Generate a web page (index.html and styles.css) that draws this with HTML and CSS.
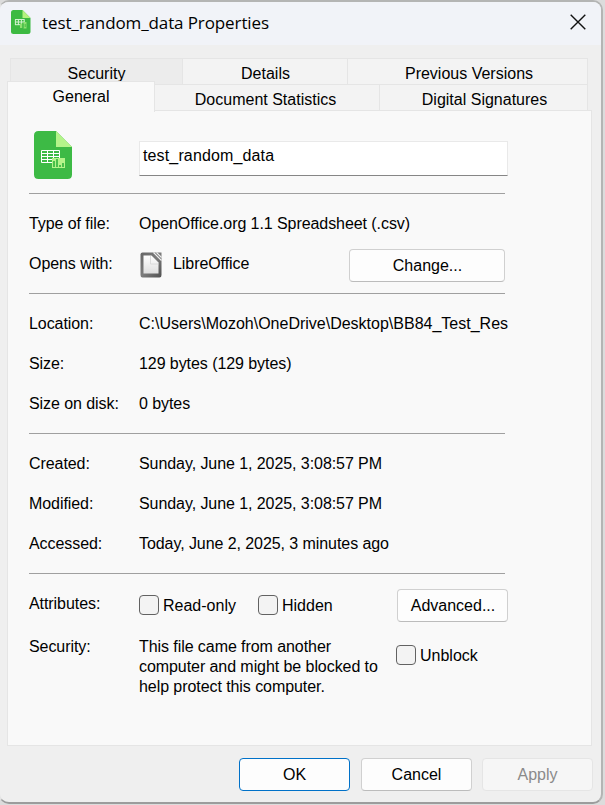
FILE: index.html
```html
<!DOCTYPE html>
<html lang="en">
<head>
<meta charset="utf-8">
<title>test_random_data Properties</title>
<link rel="stylesheet" href="styles.css">
</head>
<body>
<div class="window">
  <header class="titlebar">
    <svg class="title-icon" width="20" height="24" viewBox="0 0 20 24">
      <path d="M2.5 0H11.5L19.5 8V21.5Q19.5 24 17 24H2.5Q0 24 0 21.5V2.5Q0 0 2.5 0Z" fill="#3dba42"/>
      <path d="M11.5 0L19.5 8H11.5Z" fill="#b4f27e"/>
      <path d="M4 9.5H13.5M4 12H13.5M4 14.7H10M4.4 9.5V15M7.4 9.5V15M10.4 9.5V15M13.2 9.5V12" fill="none" stroke="#d4f3d0" stroke-width="1"/>
      <path d="M9 13.5H11.5V18H9ZM12.5 12H15.5V18.5H12.5Z" fill="#8fe070"/>
      <path d="M11.9 14V18M14.2 14V17" stroke="#3dba42" stroke-width=".9"/>
    </svg>
    <h1 class="title">test_random_data Properties</h1>
    <svg class="close" width="16" height="16" viewBox="0 0 16 16"><path d="M.7 .7L15.3 15.3M15.3 .7L.7 15.3" stroke="#111" stroke-width="1.4"/></svg>
  </header>
  <nav class="tabs">
    <div class="tab-row back">
      <div class="tab security">Security</div>
      <div class="tab details">Details</div>
      <div class="tab versions">Previous Versions</div>
    </div>
    <div class="tab-row front">
      <div class="tab general">General</div>
      <div class="tab stats">Document Statistics</div>
      <div class="tab signatures">Digital Signatures</div>
    </div>
  </nav>
  <main class="panel">
    <div class="file-head">
      <svg class="file-icon" width="38" height="48" viewBox="0 0 38 48">
        <path d="M4 0H22L38 16V43.5Q38 48 33.5 48H4.5Q0 48 0 43.5V4.5Q0 0 4.5 0Z" fill="#3dba45"/>
        <path d="M22 0L38 16H22Z" fill="#b4f48a"/>
        <path d="M7.5 19.5H25.5V31.5H7.5ZM7 22.5H26M7 25.5H26M7 28.5H26M13.5 19V32M19.5 19V32" fill="none" stroke="#fff" stroke-width="1"/>
        <path d="M18 27H31V37H18Z" fill="#b4f48a"/>
        <path d="M20 30V36M23 28V36M26 34V36M29 32V36" stroke="#3dba45" stroke-width="1.8"/>
      </svg>
      <div class="name-field">test_random_data</div>
    </div>
    <section class="group">
      <div class="row"><span class="label">Type of file:</span><span>OpenOffice.org 1.1 Spreadsheet (.csv)</span></div>
      <div class="row"><span class="label">Opens with:</span>
        <svg class="app-icon" width="22" height="26" viewBox="0 0 22 26">
          <defs>
            <linearGradient id="frame" x1="0" y1="0" x2="1" y2="1"><stop offset="0" stop-color="#666"/><stop offset=".5" stop-color="#7c7c7c"/><stop offset="1" stop-color="#505050"/></linearGradient>
            <linearGradient id="paper" x1="0" y1="0" x2="0" y2="1"><stop offset="0" stop-color="#fff"/><stop offset="1" stop-color="#dedede"/></linearGradient>
          </defs>
          <path d="M2.5 .5H21.5V23Q21.5 25.5 19.5 25.5H2.5Q.5 25.5 .5 23V2.5Q.5 .5 2.5 .5Z" fill="url(#frame)"/>
          <path d="M3.5 3.5H11.5L18.5 10.5V21.5H3.5Z" fill="url(#paper)"/>
          <path d="M10.5 4V12H18.5" fill="none" stroke="#d5d5d5" stroke-width=".8"/>
          <path d="M13.5 .5L21.5 8.5M16.5 .5L21.5 5.5" stroke="#eee" stroke-width="1.2"/>
        </svg>
        <span>LibreOffice</span><span class="button change">Change...</span></div>
    </section>
    <section class="group">
      <div class="row"><span class="label">Location:</span><span class="path">C:\Users\Mozoh\OneDrive\Desktop\BB84_Test_Res</span></div>
      <div class="row"><span class="label">Size:</span><span>129 bytes (129 bytes)</span></div>
      <div class="row"><span class="label">Size on disk:</span><span>0 bytes</span></div>
    </section>
    <section class="group">
      <div class="row"><span class="label">Created:</span><span>Sunday, June 1, 2025, 3:08:57 PM</span></div>
      <div class="row"><span class="label">Modified:</span><span>Sunday, June 1, 2025, 3:08:57 PM</span></div>
      <div class="row"><span class="label">Accessed:</span><span>Today, June 2, 2025, 3 minutes ago</span></div>
    </section>
    <section class="group">
      <div class="row attributes"><span class="label">Attributes:</span>
        <span class="option readonly"><i class="box"></i><span>Read-only</span></span>
        <span class="option"><i class="box"></i><span>Hidden</span></span>
        <span class="button advanced">Advanced...</span></div>
      <div class="row blocked"><span class="label">Security:</span>
        <p class="notice">This file came from another<br>computer and might be blocked to<br>help protect this computer.</p>
        <span class="option unblock"><i class="box"></i><span>Unblock</span></span></div>
    </section>
  </main>
  <footer class="actions">
    <span class="button primary">OK</span>
    <span class="button">Cancel</span>
    <span class="button disabled">Apply</span>
  </footer>
</div>
</body>
</html>
```
FILE: styles.css
```css
* { box-sizing: border-box; }
body {
  margin: 0;
  width: 605px;
  height: 805px;
  overflow: hidden;
  background: #dcdcdc;
  font: 16px/20px "Liberation Sans", Arial, sans-serif;
  color: #000;
}
.window {
  width: 604px;
  height: 804px;
  margin-left: -1px;
  display: flex;
  flex-direction: column;
  background: #efefef;
  border: 2px solid #b4b5b4;
  border-left: 1px solid #e4e4e4;
  border-bottom-color: #9c9c9c;
  border-radius: 10px;
  overflow: hidden;
}
.titlebar {
  height: 43px;
  flex: none;
  display: flex;
  align-items: center;
  padding: 0 15px 2px 11px;
  background: #f1f3f8;
}
.title-icon { margin-top: -1px; }
.close { margin-top: -1px; }
.title {
  margin: 0 auto 0 11px;
  font: 400 17px/24px "Open Sans", "Noto Sans", sans-serif;
  letter-spacing: -0.11px;
  white-space: nowrap;
}
.tabs { margin: 13px 10px 0 7px; }
.tab-row { display: flex; height: 26px; }
.back { margin: 0 3px; }
.front { margin-right: 3px; }
.tab {
  height: 26px;
  padding-top: 5px;
  overflow: hidden;
  text-align: center;
  background: #f3f3f3;
  border-top: 1px solid #e5e5e5;
  border-right: 1px solid #e5e5e5;
}
.security { width: 173px; background: #ececec; border-left: 1px solid #e5e5e5; }
.details { width: 165px; padding-left: 1px; }
.versions { flex: 1; padding-left: 3px; }
.general {
  position: relative;
  width: 148px;
  height: 31px;
  margin-top: -3px;
  background: #f9f9f9;
  border-left: 1px solid #e5e5e5;
}
.stats { width: 225px; padding-right: 3px; }
.signatures { flex: 1; padding-left: 2px; }
.panel {
  width: 585px;
  height: 636px;
  flex: none;
  margin-left: 7px;
  padding: 20px 0 0 21px;
  background: #f9f9f9;
  border: 1px solid #e5e5e5;
}
.file-head { display: flex; height: 62px; padding-left: 5px; }
.name-field {
  width: 369px;
  height: 35px;
  margin: 10px 0 0 67px;
  padding: 4px 3px;
  background: #fff;
  border: 1px solid #e9e9e9;
  border-bottom-color: #868686;
  letter-spacing: 0.14px;
}
.group {
  width: 476px;
  padding: 9px 0 10px;
  border-top: 1px solid #a0a0a0;
  letter-spacing: -0.07px;
}
.row { display: flex; align-items: center; height: 40px; white-space: nowrap; }
.row > span:not(.button):not(.option) { padding-top: 2px; }
.label { width: 110px; flex: none; }
.app-icon { margin: 4px 11px 0 1px; }
.button {
  display: flex;
  align-items: center;
  justify-content: center;
  width: 111px;
  height: 33px;
  flex: none;
  padding: 1px 0 0 1px;
  letter-spacing: 0;
  background: #fdfdfd;
  border: 1px solid #d0d0d0;
  border-bottom-color: #bcbcbc;
  border-radius: 4px;
}
.change { width: 156px; margin: 4px 0 0 auto; }
.path { width: 370px; flex: none; letter-spacing: 0; }
.option { display: flex; align-items: center; gap: 4px; margin-top: 4px; letter-spacing: 0; }
.option span { padding-top: 2px; }
.box {
  width: 20px;
  height: 20px;
  background: #f3f3f3;
  border: 1px solid #626262;
  border-radius: 4px;
}
.readonly { width: 119px; }
.advanced { margin: 4px -3px 0 auto; }
.blocked { height: 66px; align-items: flex-start; padding-top: 12px; }
.notice { width: 257px; margin: 2px 0 0; flex: none; }
.unblock { margin-top: 9px; }
.actions {
  display: flex;
  gap: 11px;
  justify-content: flex-end;
  padding: 12px 8px 0 0;
}
.actions .button { padding: 0; }
.primary { border-color: #0071c8; }
.actions .disabled { margin-left: -1px; color: #8a8a8a; background: #f6f6f6; border-color: #e5e5e5; }
```
